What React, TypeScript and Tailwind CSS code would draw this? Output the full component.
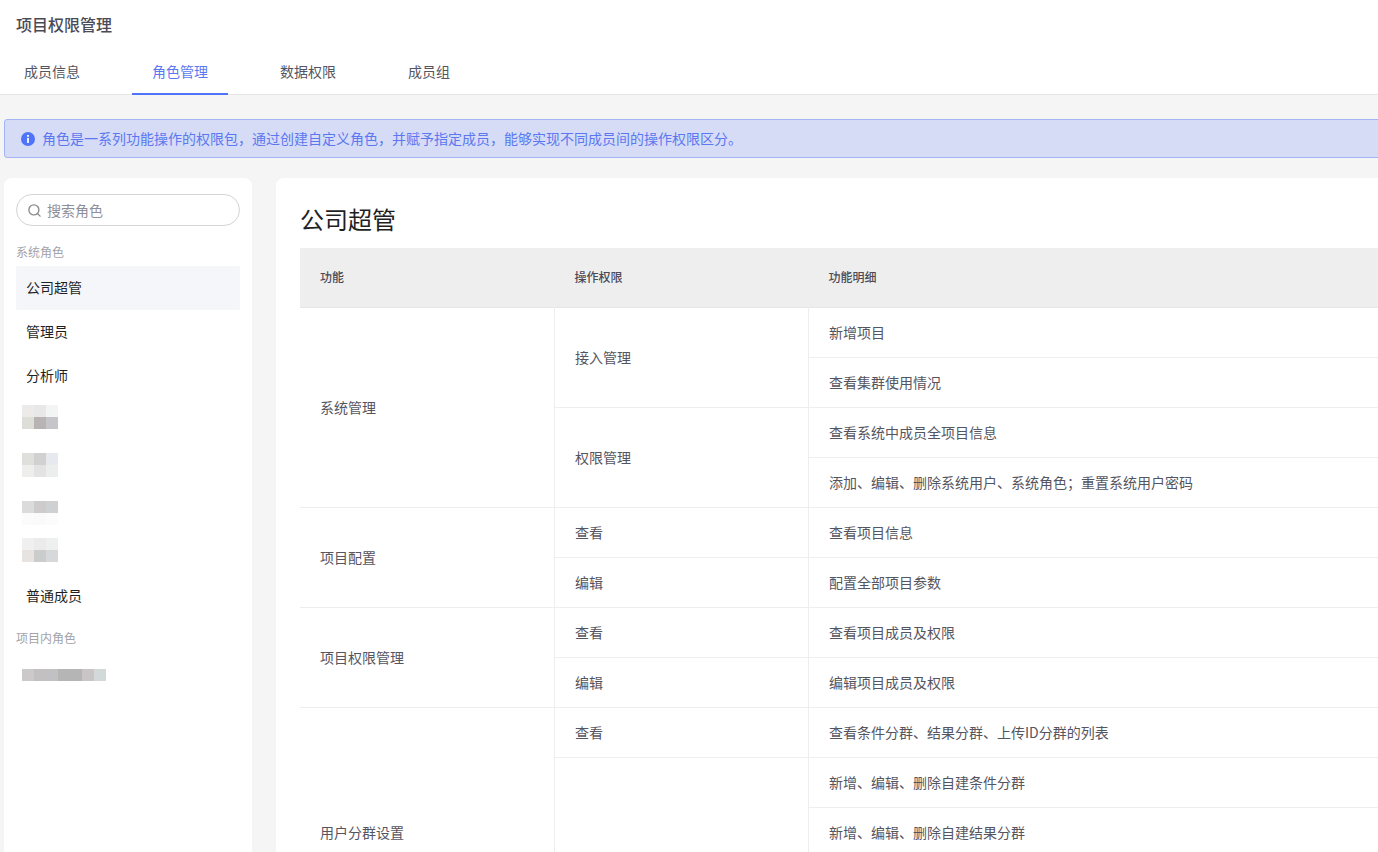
import { Search } from "lucide-react";

type Row = { fn?: [string, number]; op?: [string, number]; detail?: string };

const rows: Row[] = [
  { fn: ["系统管理", 4], op: ["接入管理", 2], detail: "新增项目" },
  { detail: "查看集群使用情况" },
  { op: ["权限管理", 2], detail: "查看系统中成员全项目信息" },
  { detail: "添加、编辑、删除系统用户、系统角色；重置系统用户密码" },
  { fn: ["项目配置", 2], op: ["查看", 1], detail: "查看项目信息" },
  { op: ["编辑", 1], detail: "配置全部项目参数" },
  { fn: ["项目权限管理", 2], op: ["查看", 1], detail: "查看项目成员及权限" },
  { op: ["编辑", 1], detail: "编辑项目成员及权限" },
  { fn: ["用户分群设置", 5], op: ["查看", 1], detail: "查看条件分群、结果分群、上传ID分群的列表" },
  { op: ["", 4], detail: "新增、编辑、删除自建条件分群" },
  { detail: "新增、编辑、删除自建结果分群" },
  {},
  {},
];

const tabs = ["成员信息", "角色管理", "数据权限", "成员组"];

// 打码的色块
const Mosaic = ({ cells }: { cells: string[][] }) => (
  <div className="flex flex-col">
    {cells.map((line, i) => (
      <div key={i} className="flex">
        {line.map((c, j) => (
          <div key={j} className="w-[12px] h-[12px]" style={{ backgroundColor: c }} />
        ))}
      </div>
    ))}
  </div>
);

const RoleItem = ({ name, active }: { name: string; active?: boolean }) => (
  <div
    className={`h-[44px] pl-[10px] pb-[2px] flex items-center rounded-[2px] text-[14px] text-[#1f1f24] ${
      active ? "bg-[#f5f6fa]" : ""
    }`}
  >
    {name}
  </div>
);

const MosaicItem = ({ cells, className }: { cells: string[][]; className: string }) => (
  <div className={`h-[44px] pl-[6px] ${className}`}>
    <Mosaic cells={cells} />
  </div>
);

export default function App() {
  return (
    <div className="w-[1378px] h-[852px] overflow-hidden bg-[#f5f5f5] font-['Noto_Sans_CJK_SC','Noto_Sans',sans-serif]">
      {/* 顶部标题和标签 */}
      <div className="h-[95px] bg-white border-b border-[#e6e6e6]">
        <div className="pl-[16px] pt-[12px] text-[16px] leading-[24px] font-medium text-[#4b4b57]">
          项目权限管理
        </div>
        <div className="mt-[13px] pl-[4px] flex gap-[32px]">
          {tabs.map((t, i) => (
            <div
              key={t}
              className={`h-[46px] px-[20px] flex items-center text-[14px] ${
                i === 1 ? "pt-[1px] text-[#5b78f0] border-b-2 border-[#4f74f9]" : "pb-[1px] text-[#55555f]"
              }`}
            >
              {t}
            </div>
          ))}
        </div>
      </div>

      <div className="pl-[4px] pt-[24px]">
        {/* 提示条 */}
        <div className="h-[39px] w-[1400px] pl-[16px] flex items-center gap-[7px] bg-[#d6dcf6] border border-[#a3b5f5] rounded-[3px] text-[14px] text-[#5b78f0]">
          <svg viewBox="0 0 14 14" className="w-[14px] h-[14px] shrink-0">
            <circle cx="7" cy="7" r="7" fill="#4f74f9" />
            <rect x="6.1" y="3" width="1.8" height="1.8" fill="#fff" />
            <rect x="6.1" y="5.9" width="1.8" height="5" fill="#fff" />
          </svg>
          角色是一系列功能操作的权限包，通过创建自定义角色，并赋予指定成员，能够实现不同成员间的操作权限区分。
        </div>

        <div className="mt-[20px] flex gap-[24px]">
          {/* 左侧角色列表 */}
          <div className="w-[248px] h-[700px] shrink-0 bg-white rounded-t-[8px] px-[12px] pt-[16px]">
            <div className="h-[32px] rounded-full border border-[#d4d4d4] flex items-center pl-[10px] gap-[5px]">
              <Search className="w-[15px] h-[15px] text-[#8c8c8c]" strokeWidth={2.2} />
              <span className="text-[14px] text-[#8f8f9a]">搜索角色</span>
            </div>
            <div className="mt-[17px] h-[23px] text-[12px] leading-[18px] text-[#a3a3a8]">系统角色</div>
            <RoleItem name="公司超管" active />
            <RoleItem name="管理员" />
            <RoleItem name="分析师" />
            <MosaicItem className="pt-[7px]" cells={[["#ecebea", "#e8e8e9", "#f3f4f4"], ["#deded9", "#b8b4b3", "#c6c5ca"]]} />
            <MosaicItem className="pt-[11px]" cells={[["#dfdfdb", "#d2d1d2", "#e6e9ee"], ["#eeeeed", "#e3e3e4", "#eceeee"]]} />
            <MosaicItem className="pt-[15px]" cells={[["#dcdbdb", "#cdcbcc", "#cfd0d2"], ["#fbfbfb", "#fafafa", "#fcfcfc"]]} />
            <MosaicItem className="pt-[8px]" cells={[["#f0f0f1", "#ebebec", "#eef0f0"], ["#e6e3e0", "#cbcdcc", "#d7d8da"]]} />
            <RoleItem name="普通成员" />
            <div className="mt-[11px] h-[24px] text-[12px] leading-[18px] text-[#a3a3a8]">项目内角色</div>
            <div className="mt-[16px] pl-[6px]">
              <Mosaic cells={[["#cbc9c9", "#c2c0c1", "#c1c0c2", "#b6b5b5", "#b5b5b5", "#c9c5c7", "#d3d8d9"]]} />
            </div>
          </div>

          {/* 右侧权限表格 */}
          <div className="w-[1200px] h-[700px] shrink-0 bg-white rounded-t-[8px] px-[24px]">
            <h2 className="pt-[24px] h-[70px] text-[24px] leading-[34px] text-[#1f1f24]">公司超管</h2>
            <table className="w-[1152px] table-fixed border-collapse text-[14px] text-[#55555f]">
              <colgroup>
                <col className="w-[254.5px]" />
                <col className="w-[254px]" />
                <col />
              </colgroup>
              <thead>
                <tr className="h-[59px] bg-[#eeeeee] border-b border-[#e6e6e6] text-left text-[12px] text-[#4b4b57]">
                  <th className="pl-[20px] pb-[1px] font-medium">功能</th>
                  <th className="pl-[20px] pb-[1px] font-medium">操作权限</th>
                  <th className="pl-[20px] pb-[1px] font-medium">功能明细</th>
                </tr>
              </thead>
              <tbody>
                {rows.map((r, i) => (
                  <tr key={i} className="h-[50px]">
                    {r.fn && (
                      <td rowSpan={r.fn[1]} className="pl-[20px] border-b border-r border-[#eeeeee]">
                        {r.fn[0]}
                      </td>
                    )}
                    {r.op && (
                      <td rowSpan={r.op[1]} className="pl-[20px] border-b border-r border-[#eeeeee]">
                        {r.op[0]}
                      </td>
                    )}
                    <td className="pl-[20px] border-b border-[#eeeeee]">{r.detail}</td>
                  </tr>
                ))}
              </tbody>
            </table>
          </div>
        </div>
      </div>
    </div>
  );
}
